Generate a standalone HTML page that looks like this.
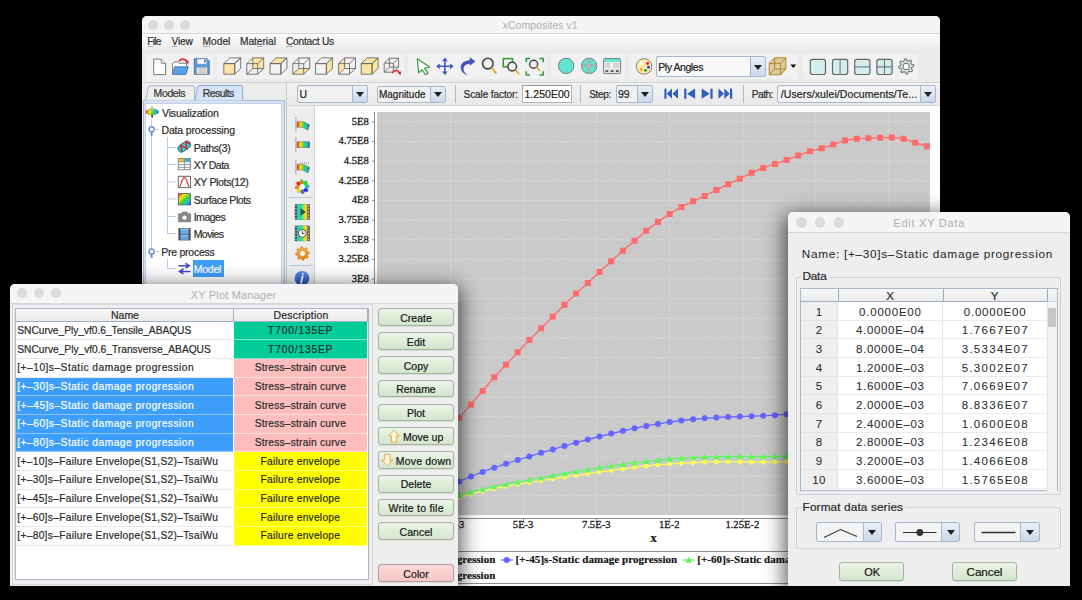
<!DOCTYPE html>
<html><head><meta charset="utf-8"><title>xComposites</title>
<style>
*{margin:0;padding:0;box-sizing:border-box}
html,body{width:1082px;height:600px;overflow:hidden;background:#000}
body{position:relative;font-family:"Liberation Sans",sans-serif;color:#2b2b2b;font-size:10px}
.a{position:absolute}
.t{position:absolute;white-space:nowrap;line-height:1;-webkit-text-stroke:0.2px currentColor}
.win{position:absolute;background:#eeeeee;border-radius:5px 5px 0 0;overflow:hidden}
.tl{position:absolute;width:10px;height:10px;border-radius:50%;background:#dcdcdc}
.ttl{position:absolute;left:0;right:0;height:17px;background:#f5f5f5;border-bottom:1px solid #d6d6d6}
.ttxt{position:absolute;top:4px;left:0;right:0;text-align:center;color:#b0b0b0;font-size:10.5px;line-height:1}
.combo{position:absolute;background:#f1f1f1;border:1px solid #a6b7cf;border-radius:2px}
.combo .arr{position:absolute;top:0;bottom:0;right:0;border-left:1px solid #a6b7cf;background:linear-gradient(#e8eff8,#c9d8ec)}
.combo .arr:after{content:"";position:absolute;left:50%;top:50%;margin:-2px 0 0 -4px;border-left:4px solid transparent;border-right:4px solid transparent;border-top:5px solid #1e1e1e}
.combo .v{position:absolute;left:4px;top:50%;margin-top:-5px;font-size:10.5px;line-height:1;color:#222}
.btn{position:absolute;border:1px solid #a3b39e;border-radius:3px;background:linear-gradient(#eaf4e7,#d3e6cd);text-align:center;font-size:10.5px;color:#1d1d1d;line-height:17px;box-shadow:0 0.5px 0 rgba(0,0,0,0.15)}
.grp{position:absolute;background:#f1f1f1;border-radius:2px}
.shadow{box-shadow:0 6px 20px 4px rgba(0,0,0,0.62)}
.ax{font-family:"Liberation Serif",serif;font-size:10.5px;color:#222}
.axb{font-family:"Liberation Serif",serif;font-size:12px;font-weight:bold;color:#111}
.lg{font-family:"Liberation Serif",serif;font-size:11px;font-weight:bold;color:#111}
.hd{font-size:10.5px;color:#2a2a2a}
.cell{font-size:10.5px;color:#2a2a2a}
.cell2{font-size:11px;color:#2a2a2a}

</style></head><body>
<div class="win shadow" style="left:142px;top:16px;width:798px;height:570px"></div>
<div class="ttl" style="left:142px;right:auto;width:798px;top:16px;height:18px;border-radius:5px 5px 0 0"></div>
<div class="tl" style="left:148.3px;top:20px"></div>
<div class="tl" style="left:164.1px;top:20px"></div>
<div class="tl" style="left:180.0px;top:20px"></div>
<div class="t" style="left:502.70px;top:20.48px;font-size:10.5px;color:#b0b0b0;letter-spacing:0.016px;-webkit-text-stroke:0">xComposites v1</div>
<div class="a" style="left:142px;top:34px;width:798px;height:16px;background:linear-gradient(#fbfbfb,#ececec)"></div>
<div class="t" style="left:147.20px;top:36.93px;font-size:10.2px;color:#303030;letter-spacing:-0.745px">File</div>
<div class="t" style="left:171.60px;top:36.93px;font-size:10.2px;color:#303030;letter-spacing:-0.242px">View</div>
<div class="t" style="left:202.60px;top:36.93px;font-size:10.2px;color:#303030;letter-spacing:0.004px">Model</div>
<div class="t" style="left:240.00px;top:36.93px;font-size:10.2px;color:#303030;letter-spacing:-0.040px">Material</div>
<div class="t" style="left:286.00px;top:36.93px;font-size:10.2px;color:#303030;letter-spacing:-0.250px">Contact Us</div>
<div class="a" style="left:147.5px;top:46.3px;width:5.0px;height:1px;background:#a8a8a8"></div>
<div class="a" style="left:171.8px;top:46.3px;width:5.699999999999989px;height:1px;background:#a8a8a8"></div>
<div class="a" style="left:202.8px;top:46.3px;width:7.199999999999989px;height:1px;background:#a8a8a8"></div>
<div class="a" style="left:256.5px;top:46.3px;width:5.0px;height:1px;background:#a8a8a8"></div>
<div class="a" style="left:286.3px;top:46.3px;width:6.699999999999989px;height:1px;background:#a8a8a8"></div>
<div class="a" style="left:142px;top:50px;width:798px;height:33px;background:#ebebeb;border-bottom:1px solid #d2d2d2"></div>
<div class="grp" style="left:146.3px;top:54px;width:66.6px;height:24.7px"></div>
<div class="grp" style="left:217px;top:54px;width:187.0px;height:24.7px"></div>
<div class="grp" style="left:407.8px;top:54px;width:139.2px;height:24.7px"></div>
<div class="grp" style="left:551px;top:54px;width:73.5px;height:24.7px"></div>
<div class="grp" style="left:629px;top:54px;width:169.0px;height:24.7px"></div>
<div class="grp" style="left:803px;top:54px;width:115.0px;height:24.7px"></div>
<div class="combo" style="left:656px;top:56px;width:110px;height:21px;background:#f8f8f8"><div class="arr" style="width:15px"></div></div>
<div class="t" style="left:658.30px;top:61.88px;font-size:10.5px;color:#222;letter-spacing:-0.437px">Ply Angles</div>
<div class="a" style="left:142px;top:83px;width:145px;height:503px;background:#ececec"></div>
<div class="a" style="left:143px;top:100px;width:142px;height:486px;background:#d6e4f6;border:1px solid #a5bddd"></div>
<div class="a" style="left:145px;top:103px;width:136.5px;height:483px;background:#fff;border:1px solid #c4d2e6"></div>
<svg class="a" style="left:0;top:0" width="1082" height="600"><path d="M145.5 100.5L148.6 86.8Q149 86 150 86H192.5Q194.5 86 194.5 88V100.5" fill="#eeeeee" stroke="#a9bad3" stroke-width="1"/><path d="M194.8 100.5L197.8 86.4Q198.2 85.5 199.2 85.5H240.8Q242.6 85.5 242.6 87.3V100.5" fill="#d6e4f6" stroke="#8faad3" stroke-width="1"/></svg>
<div class="t" style="left:153.60px;top:87.88px;font-size:10.5px;color:#333;letter-spacing:-0.390px">Models</div>
<div class="t" style="left:202.70px;top:87.88px;font-size:10.5px;color:#333;letter-spacing:-0.569px">Results</div>
<svg class="a" style="left:0;top:0" width="1082" height="600"><g stroke="#b9cbe3" stroke-width="1" fill="none"><path d="M151.5 119V251M167.5 137V234M167.5 147.5H176M167.5 164.5H176M167.5 182H176M167.5 199H176M167.5 216.5H176M167.5 233.5H176M151.5 251.5H159M151.5 129.5H159M167.5 259V268.5H176"/></g></svg>
<div class="t" style="left:162.00px;top:107.88px;font-size:10.5px;color:#2c2c2c;letter-spacing:-0.164px">Visualization</div>
<div class="t" style="left:161.50px;top:125.22px;font-size:10.5px;color:#2c2c2c;letter-spacing:-0.170px">Data processing</div>
<div class="t" style="left:193.70px;top:142.57px;font-size:10.5px;color:#2c2c2c;letter-spacing:-0.383px">Paths(3)</div>
<div class="t" style="left:193.70px;top:159.93px;font-size:10.5px;color:#2c2c2c;letter-spacing:-0.536px">XY Data</div>
<div class="t" style="left:193.70px;top:177.28px;font-size:10.5px;color:#2c2c2c;letter-spacing:-0.332px">XY Plots(12)</div>
<div class="t" style="left:193.70px;top:194.62px;font-size:10.5px;color:#2c2c2c;letter-spacing:-0.429px">Surface Plots</div>
<div class="t" style="left:193.70px;top:211.98px;font-size:10.5px;color:#2c2c2c;letter-spacing:-0.487px">Images</div>
<div class="t" style="left:193.70px;top:229.33px;font-size:10.5px;color:#2c2c2c;letter-spacing:-0.572px">Movies</div>
<div class="t" style="left:161.30px;top:246.68px;font-size:10.5px;color:#2c2c2c;letter-spacing:-0.262px">Pre process</div>
<div class="a" style="left:192.9px;top:260.1px;width:31px;height:17px;background:#3d9ffb"></div>
<div class="t" style="left:193.70px;top:264.02px;font-size:10.5px;color:#fff;letter-spacing:-0.225px">Model</div>
<div class="a" style="left:286px;top:83px;width:1px;height:503px;background:#c9c9c9"></div>
<div class="a" style="left:287px;top:83px;width:653px;height:23px;background:linear-gradient(#f2f2f2,#e9e9e9);border-bottom:1px solid #d9d9d9"></div>
<div class="combo" style="left:296.9px;top:85.3px;width:71.5px;height:17.7px"><div class="arr" style="width:15.5px"></div></div>
<div class="t" style="left:299.40px;top:89.38px;font-size:10.5px;color:#222">U</div>
<div class="combo" style="left:376.7px;top:85.5px;width:69.8px;height:17.3px"><div class="arr" style="width:15.3px"></div></div>
<div class="t" style="left:379.00px;top:89.80px;font-size:10px;color:#222;letter-spacing:-0.025px">Magnitude</div>
<div class="a" style="left:454.8px;top:85px;width:1.2px;height:18px;background:#a9bbd4"></div>
<div class="a" style="left:580.3px;top:85px;width:1.2px;height:18px;background:#a9bbd4"></div>
<div class="a" style="left:742.9px;top:85px;width:1.2px;height:18px;background:#a9bbd4"></div>
<div class="t" style="left:463.60px;top:89.80px;font-size:10px;color:#2a2a2a;letter-spacing:-0.090px">Scale factor:</div>
<div class="a" style="left:522px;top:85.2px;width:49.8px;height:17.5px;background:#fff;border:1px solid #b4b4b4;border-top-color:#9a9a9a"></div>
<div class="t" style="left:524.50px;top:89.38px;font-size:10.5px;color:#222;letter-spacing:0.020px">1.250E00</div>
<div class="t" style="left:589.20px;top:89.80px;font-size:10px;color:#2a2a2a;letter-spacing:-0.338px">Step:</div>
<div class="combo" style="left:615.5px;top:85.3px;width:37.1px;height:17.6px"><div class="arr" style="width:15px"></div></div>
<div class="t" style="left:618.00px;top:89.38px;font-size:10.5px;color:#222;letter-spacing:0.020px">99</div>
<div class="t" style="left:751.80px;top:89.80px;font-size:10px;color:#2a2a2a;letter-spacing:-0.438px">Path:</div>
<div class="combo" style="left:777.3px;top:85.4px;width:158.3px;height:17.2px;background:#f3f3f3"><div class="arr" style="width:15px"></div></div>
<div class="t" style="left:780.80px;top:89.38px;font-size:10.5px;color:#222;letter-spacing:0.099px">/Users/xulei/Documents/Te...</div>
<div class="a" style="left:287px;top:106px;width:28px;height:480px;background:#ededed;border-right:1px solid #d4d4d4"></div>
<div class="a" style="left:289px;top:197px;width:24px;height:1px;background:#b4c8e2"></div>
<div class="a" style="left:289px;top:265px;width:24px;height:1px;background:#b4c8e2"></div>
<div class="a" style="left:315px;top:106px;width:625px;height:480px;background:#fff"></div>
<svg class="a" style="left:0;top:0" width="1082" height="600" viewBox="0 0 1082 600">
<defs>
<linearGradient id="rb" x1="0" x2="1" y1="0" y2="0"><stop offset="0" stop-color="#e8301c"/><stop offset="0.3" stop-color="#f5e21a"/><stop offset="0.55" stop-color="#3ed43a"/><stop offset="0.78" stop-color="#1fc3d8"/><stop offset="1" stop-color="#2a4fd6"/></linearGradient>
<linearGradient id="rbd" x1="0" x2="1" y1="0" y2="1"><stop offset="0" stop-color="#e8301c"/><stop offset="0.3" stop-color="#f5e21a"/><stop offset="0.55" stop-color="#3ed43a"/><stop offset="0.78" stop-color="#1fc3d8"/><stop offset="1" stop-color="#2a4fd6"/></linearGradient>
<linearGradient id="film" x1="0" x2="1" y1="0" y2="0"><stop offset="0" stop-color="#19c9e6"/><stop offset="0.45" stop-color="#38e07a"/><stop offset="0.8" stop-color="#f0e424"/><stop offset="1" stop-color="#f3a81c"/></linearGradient>
<linearGradient id="og" x1="0" x2="0" y1="0" y2="1"><stop offset="0" stop-color="#ffc04a"/><stop offset="1" stop-color="#f07a10"/></linearGradient>
<linearGradient id="info" x1="0" x2="0" y1="0" y2="1"><stop offset="0" stop-color="#5f8de8"/><stop offset="1" stop-color="#1f45b8"/></linearGradient>
<radialGradient id="rgear" cx="0.5" cy="0.5" r="0.5"><stop offset="0" stop-color="#fff"/><stop offset="1" stop-color="#fff"/></radialGradient>
</defs>
<path d="M152.2 106v11.5" stroke="#9a9a9a" stroke-width="1.6"/>
<ellipse cx="152.2" cy="111.9" rx="6.6" ry="3.1" fill="url(#rb)" stroke="#a08a70" stroke-width="0.5"/>
<path d="M152.2 106v5" stroke="#c4c4c4" stroke-width="1.4"/><path d="M152.2 114.5v3.2" stroke="#5a5a5a" stroke-width="1.6"/>
<path d="M151.6 131.8v4" stroke="#6d8fd6" stroke-width="2"/><circle cx="151.6" cy="129.3" r="2.6" fill="#fff" stroke="#6d8fd6" stroke-width="1.5"/><path d="M154.3 129.3H158.6" stroke="#b9cbe3" stroke-width="1"/>
<path d="M151.6 254.0v4" stroke="#6d8fd6" stroke-width="2"/><circle cx="151.6" cy="251.5" r="2.6" fill="#fff" stroke="#6d8fd6" stroke-width="1.5"/><path d="M154.3 251.5H158.6" stroke="#b9cbe3" stroke-width="1"/>
<g transform="translate(184.3 146.6) rotate(-35)"><rect x="-7" y="-3.6" width="14" height="7.2" rx="3.6" fill="#2ad3dc" stroke="#2a6070" stroke-width="0.9"/><path d="M-5 2.5L-2 -3L1 2.8L4 -3L6 1" stroke="#e0262a" stroke-width="1.5" fill="none"/></g>
<rect x="178.3" y="158.5" width="12.2" height="11.2" fill="#fff" stroke="#8a8a8a" stroke-width="1"/><rect x="178.8" y="159" width="5.6" height="2.6" fill="#f4c030"/><rect x="184.6" y="159" width="5.4" height="2.6" fill="#38b8e0"/><path d="M178.3 161.8H190.5M178.3 164.6H190.5M178.3 167.3H190.5M184.4 158.5V169.7" stroke="#8a8a8a" stroke-width="0.9"/>
<rect x="178.3" y="176.3" width="12.2" height="11.3" fill="#fff" stroke="#6a6a6a" stroke-width="1"/><path d="M179.3 186.8C181.6 186.5 181.2 177.6 184.4 177.6C187.6 177.6 187.2 186.5 189.5 186.8" stroke="#e0302a" stroke-width="1.1" fill="none"/>
<rect x="178.3" y="193.6" width="12.2" height="11.3" fill="url(#rbd)" stroke="#555" stroke-width="0.8"/>
<path d="M178.4 213.8h3l1.2-1.8h4.4l1.2 1.8h2.4v8h-12.2z" fill="#8c8c8c" stroke="#666" stroke-width="0.6"/><circle cx="184.5" cy="217.6" r="2.6" fill="#fff" stroke="#555" stroke-width="0.6"/>
<rect x="178.4" y="228.2" width="12.2" height="12.2" fill="#4a4a4a"/><rect x="180.4" y="228.8" width="8.2" height="5.1" fill="#6aa8e8"/><rect x="180.4" y="234.7" width="8.2" height="5.1" fill="#6aa8e8"/><path d="M180.4 229.4h8.2M180.4 235.3h8.2" stroke="#a8d0f8" stroke-width="0.8"/>
<path d="M178.5 265.8H188M185.5 263.4L189.5 265.8L185.5 268.2" stroke="#4646d2" stroke-width="1.5" fill="none"/><path d="M190.5 271.4H181M183.5 269L179.5 271.4L183.5 273.8" stroke="#4646d2" stroke-width="1.5" fill="none"/>
<path d="M295.9 117.6V131.6" stroke="#666" stroke-width="1" stroke-dasharray="1.2 1"/><path d="M297 121.8Q303 120.0 309.6 125.0L307.8 130.2Q302.5 126.0 297 127.39999999999999Z" fill="url(#rb)" stroke="#555" stroke-width="0.4"/>
<path d="M295.9 137.60000000000002V151.60000000000002" stroke="#666" stroke-width="1" stroke-dasharray="1.2 1"/><rect x="297" y="141.8" width="12.6" height="5.9" fill="url(#rb)" stroke="#555" stroke-width="0.4"/>
<path d="M295.9 160.3V174.3" stroke="#666" stroke-width="1" stroke-dasharray="1.2 1"/><path d="M297 164.5Q303 162.7 309.6 167.7L307.8 172.9Q302.5 168.7 297 170.1Z" fill="url(#rb)" stroke="#555" stroke-width="0.4"/><path d="M300 163.1H310" stroke="#666" stroke-width="0.8" stroke-dasharray="1 1"/>
<defs><linearGradient id="gr2" x1="0" x2="1" y1="0" y2="1"><stop offset="0" stop-color="#e83a1c"/><stop offset="0.35" stop-color="#f3d420"/><stop offset="0.6" stop-color="#3cc83c"/><stop offset="1" stop-color="#2a4fd6"/></linearGradient></defs>
<clipPath id="gclip"><polygon points="309.26,185.37 309.40,186.77 307.85,187.90 307.53,188.98 308.20,190.78 307.31,191.87 305.42,191.58 304.42,192.11 303.63,193.86 302.23,194.00 301.10,192.45 300.02,192.13 298.22,192.80 297.13,191.91 297.42,190.02 296.89,189.02 295.14,188.23 295.00,186.83 296.55,185.70 296.87,184.62 296.20,182.82 297.09,181.73 298.98,182.02 299.98,181.49 300.77,179.74 302.17,179.60 303.30,181.15 304.38,181.47 306.18,180.80 307.27,181.69 306.98,183.58 307.51,184.58"/></clipPath><g clip-path="url(#gclip)"><path d="M302.2 186.8L311.44 182.97L311.44 190.63Z" fill="#18c8c0"/><path d="M302.2 186.8L311.44 190.63L306.03 196.04Z" fill="#1830f0"/><path d="M302.2 186.8L306.03 196.04L298.37 196.04Z" fill="#6a6aa8"/><path d="M302.2 186.8L298.37 196.04L292.96 190.63Z" fill="#f0e010"/><path d="M302.2 186.8L292.96 190.63L292.96 182.97Z" fill="#ff8010"/><path d="M302.2 186.8L292.96 182.97L298.37 177.56Z" fill="#ff2010"/><path d="M302.2 186.8L298.37 177.56L306.03 177.56Z" fill="#a0a010"/><path d="M302.2 186.8L306.03 177.56L311.44 182.97Z" fill="#10e020"/></g><polygon points="309.26,185.37 309.40,186.77 307.85,187.90 307.53,188.98 308.20,190.78 307.31,191.87 305.42,191.58 304.42,192.11 303.63,193.86 302.23,194.00 301.10,192.45 300.02,192.13 298.22,192.80 297.13,191.91 297.42,190.02 296.89,189.02 295.14,188.23 295.00,186.83 296.55,185.70 296.87,184.62 296.20,182.82 297.09,181.73 298.98,182.02 299.98,181.49 300.77,179.74 302.17,179.60 303.30,181.15 304.38,181.47 306.18,180.80 307.27,181.69 306.98,183.58 307.51,184.58" fill="none" stroke="#555" stroke-width="0.4" opacity="0.6"/><circle cx="302.2" cy="186.8" r="2.8" fill="#fff"/>
<rect x="294.8" y="204.3" width="15" height="15.4" fill="#3a3a3a"/><rect x="297" y="204.3" width="10.6" height="15.4" fill="url(#film)"/><rect x="295.4" y="205.3" width="1.1" height="1.5" fill="#ddd"/><rect x="308.1" y="205.3" width="1.1" height="1.5" fill="#ddd"/><rect x="295.4" y="208.3" width="1.1" height="1.5" fill="#ddd"/><rect x="308.1" y="208.3" width="1.1" height="1.5" fill="#ddd"/><rect x="295.4" y="211.3" width="1.1" height="1.5" fill="#ddd"/><rect x="308.1" y="211.3" width="1.1" height="1.5" fill="#ddd"/><rect x="295.4" y="214.3" width="1.1" height="1.5" fill="#ddd"/><rect x="308.1" y="214.3" width="1.1" height="1.5" fill="#ddd"/><rect x="295.4" y="217.3" width="1.1" height="1.5" fill="#ddd"/><rect x="308.1" y="217.3" width="1.1" height="1.5" fill="#ddd"/>
<path d="M300.5 208.3L305.8 212L300.5 215.7Z" fill="#444"/>
<rect x="294.8" y="225.7" width="15" height="15.4" fill="#3a3a3a"/><rect x="297" y="225.7" width="10.6" height="15.4" fill="url(#film)"/><rect x="295.4" y="226.7" width="1.1" height="1.5" fill="#ddd"/><rect x="308.1" y="226.7" width="1.1" height="1.5" fill="#ddd"/><rect x="295.4" y="229.7" width="1.1" height="1.5" fill="#ddd"/><rect x="308.1" y="229.7" width="1.1" height="1.5" fill="#ddd"/><rect x="295.4" y="232.7" width="1.1" height="1.5" fill="#ddd"/><rect x="308.1" y="232.7" width="1.1" height="1.5" fill="#ddd"/><rect x="295.4" y="235.7" width="1.1" height="1.5" fill="#ddd"/><rect x="308.1" y="235.7" width="1.1" height="1.5" fill="#ddd"/><rect x="295.4" y="238.7" width="1.1" height="1.5" fill="#ddd"/><rect x="308.1" y="238.7" width="1.1" height="1.5" fill="#ddd"/>
<circle cx="302.3" cy="233.4" r="4" fill="#fff" stroke="#444" stroke-width="0.9"/><path d="M302.3 230.8V233.5H304.6" stroke="#333" stroke-width="0.9" fill="none"/>
<polygon points="309.16,252.15 309.30,253.48 307.44,254.46 307.16,255.41 308.17,257.26 307.33,258.29 305.31,257.67 304.44,258.14 303.85,260.16 302.52,260.30 301.54,258.44 300.59,258.16 298.74,259.17 297.71,258.33 298.33,256.31 297.86,255.44 295.84,254.85 295.70,253.52 297.56,252.54 297.84,251.59 296.83,249.74 297.67,248.71 299.69,249.33 300.56,248.86 301.15,246.84 302.48,246.70 303.46,248.56 304.41,248.84 306.26,247.83 307.29,248.67 306.67,250.69 307.14,251.56" fill="url(#og)" stroke="#c86a10" stroke-width="0.7" stroke-linejoin="round"/><circle cx="302.5" cy="253.5" r="3.0" fill="#fff" stroke="#c86a10" stroke-width="0.7"/>
<circle cx="302" cy="278.3" r="7.4" fill="url(#info)"/><path d="M302.9 273.6v0.1M302.6 276.2L301.1 282.8" stroke="#fff" stroke-width="1.8" stroke-linecap="round"/>
<path d="M153.7 59.1H161.3L165.6 63.4V74.6H153.7Z" fill="#fff" stroke="#7a7a7a" stroke-width="1"/><path d="M161.3 59.1V63.4H165.6" fill="#eee" stroke="#7a7a7a" stroke-width="0.9"/>
<path d="M172.6 74.2V63.3L174.3 61.9H178L179 63.3H186.5V66.5" fill="#fff" stroke="#777" stroke-width="0.9"/><path d="M174.6 66.8H188.3L186 74.4H172.4Z" fill="#58a0e8" stroke="#3a6aa8" stroke-width="0.8"/>
<path d="M179 61.3C181 58.3 186 58.3 187.2 62.3" stroke="#e0202a" stroke-width="1.6" fill="none"/><path d="M185.2 61.5L188.6 60.2L188.2 64.6Z" fill="#e0202a"/>
<path d="M194.4 58.8H207L209.2 61V74.3H194.4Z" fill="#5a9fe2" stroke="#3a6aa0" stroke-width="0.9"/><rect x="197.5" y="59.2" width="8.8" height="4.6" fill="#fff"/><rect x="204.2" y="59.8" width="1.4" height="2.6" fill="#555"/><rect x="196.6" y="67.2" width="10.6" height="7" fill="#eee" stroke="#888" stroke-width="0.5"/><path d="M198 69H206M198 71H206M198 73H206" stroke="#999" stroke-width="0.7"/>
<path d="M223.8 63.6H234.70000000000002V74.1948H223.8Z" fill="#fde6a4" stroke="none"/><path d="M223.8 63.6L229.8 57.9H240.70000000000002L234.70000000000002 63.6Z" fill="#f3f3f3" stroke="none"/><path d="M234.70000000000002 63.6L240.70000000000002 57.9V68.4948L234.70000000000002 74.1948Z" fill="#f3f3f3" stroke="none"/><path d="M223.8 63.6H234.70000000000002V74.1948H223.8ZM223.8 63.6L229.8 57.9H240.70000000000002L234.70000000000002 63.6ZM234.70000000000002 63.6L240.70000000000002 57.9V68.4948L234.70000000000002 74.1948Z" fill="none" stroke="#6a6a6a" stroke-width="0.9"/>
<path d="M252.8 57.9H263.7V68.4948H252.8Z" fill="#fde6a4" stroke="none"/><path d="M246.8 63.6H257.7V74.1948H246.8ZM252.8 57.9H263.7V68.4948H252.8ZM246.8 63.6l6 -5.7M257.7 63.6l6 -5.7M257.7 74.1948l6 -5.7M246.8 74.1948l6 -5.7" fill="none" stroke="#6a6a6a" stroke-width="0.9"/>
<path d="M270 63.6H280.9V74.1948H270Z" fill="#f3f3f3" stroke="none"/><path d="M270 63.6L276 57.9H286.9L280.9 63.6Z" fill="#fde6a4" stroke="none"/><path d="M280.9 63.6L286.9 57.9V68.4948L280.9 74.1948Z" fill="#f3f3f3" stroke="none"/><path d="M270 63.6H280.9V74.1948H270ZM270 63.6L276 57.9H286.9L280.9 63.6ZM280.9 63.6L286.9 57.9V68.4948L280.9 74.1948Z" fill="none" stroke="#6a6a6a" stroke-width="0.9"/>
<path d="M292.8 74.1948L298.8 68.4948H309.7L303.7 74.1948Z" fill="#fde6a4" stroke="none"/><path d="M292.8 63.6H303.7V74.1948H292.8ZM298.8 57.9H309.7V68.4948H298.8ZM292.8 63.6l6 -5.7M303.7 63.6l6 -5.7M303.7 74.1948l6 -5.7M292.8 74.1948l6 -5.7" fill="none" stroke="#6a6a6a" stroke-width="0.9"/>
<path d="M315.5 63.6H326.4V74.1948H315.5Z" fill="#f3f3f3" stroke="none"/><path d="M315.5 63.6L321.5 57.9H332.4L326.4 63.6Z" fill="#f3f3f3" stroke="none"/><path d="M326.4 63.6L332.4 57.9V68.4948L326.4 74.1948Z" fill="#fde6a4" stroke="none"/><path d="M315.5 63.6H326.4V74.1948H315.5ZM315.5 63.6L321.5 57.9H332.4L326.4 63.6ZM326.4 63.6L332.4 57.9V68.4948L326.4 74.1948Z" fill="none" stroke="#6a6a6a" stroke-width="0.9"/>
<path d="M338.6 63.6L344.6 57.9V68.4948L338.6 74.1948Z" fill="#fde6a4" stroke="none"/><path d="M338.6 63.6H349.5V74.1948H338.6ZM344.6 57.9H355.5V68.4948H344.6ZM338.6 63.6l6 -5.7M349.5 63.6l6 -5.7M349.5 74.1948l6 -5.7M338.6 74.1948l6 -5.7" fill="none" stroke="#6a6a6a" stroke-width="0.9"/>
<path d="M361.2 63.6H372.09999999999997V74.1948H361.2Z" fill="#fde6a4" stroke="none"/><path d="M361.2 63.6L367.2 57.9H378.09999999999997L372.09999999999997 63.6Z" fill="#fde6a4" stroke="none"/><path d="M372.09999999999997 63.6L378.09999999999997 57.9V68.4948L372.09999999999997 74.1948Z" fill="#fde6a4" stroke="none"/><path d="M361.2 63.6H372.09999999999997V74.1948H361.2ZM361.2 63.6L367.2 57.9H378.09999999999997L372.09999999999997 63.6ZM372.09999999999997 63.6L378.09999999999997 57.9V68.4948L372.09999999999997 74.1948Z" fill="none" stroke="#6a6a6a" stroke-width="0.9"/>
<path d="M384.2 63.2H393.4V72.14240000000001H384.2ZM389.4 58.2H398.59999999999997V67.14240000000001H389.4ZM384.2 63.2l5.2 -5M393.4 63.2l5.2 -5M393.4 72.14240000000001l5.2 -5M384.2 72.14240000000001l5.2 -5" fill="none" stroke="#6a6a6a" stroke-width="0.9"/>
<path d="M392 73.2C394 69.8 398 69.6 399.6 73" stroke="#e0202a" stroke-width="1.5" fill="none"/><path d="M397.6 72.4L401.2 71.4L400.5 75.4Z" fill="#e0202a"/>
<path d="M417.3 58.8L429.6 67L424.6 68.2L428 73.2L425.4 74.8L422.2 69.8L418.6 72.8Z" fill="#fff" stroke="#3a9a3a" stroke-width="1.2" stroke-linejoin="round"/>
<path d="M444.9 58.3V74.3M436.9 66.3H452.9" stroke="#3f5ec0" stroke-width="1.6"/><path d="M444.9 57.5L442 61.2H447.8ZM444.9 75.1L442 71.4H447.8ZM436.1 66.3L439.8 63.4V69.2ZM453.7 66.3L450 63.4V69.2Z" fill="#3f5ec0"/>
<path d="M467.8 75.4C458.6 72.6 457.6 60.8 469.7 60.2V57.2L475.4 61.4L469.7 65.8V63.8C462.4 64.2 461.2 71 467.8 75.4Z" fill="#4252b8"/>
<circle cx="487.8" cy="63.6" r="5.3" fill="none" stroke="#444" stroke-width="1.6"/><path d="M491.6 67.6L496.4 73.6" stroke="#e8a030" stroke-width="1.8"/>
<rect x="503.3" y="58.6" width="9.2" height="8.2" fill="none" stroke="#2f9a2f" stroke-width="1.5"/><circle cx="512.2" cy="66.6" r="4.3" fill="#f1f1f1" stroke="#444" stroke-width="1.5"/><path d="M515.3 69.8L519.2 74.2" stroke="#e8a030" stroke-width="1.7"/>
<path d="M526.3 62.3V58.6H530M539.5 58.6H543.2V62.3M543.2 71.3V75H539.5M530 75H526.3V71.3" fill="none" stroke="#2f9a2f" stroke-width="1.5"/><circle cx="533.6" cy="64.3" r="4" fill="none" stroke="#444" stroke-width="1.4"/><path d="M536.5 67.2L540 71" stroke="#e8a030" stroke-width="1.6"/>
<circle cx="566.1" cy="65.9" r="7.7" fill="#5fe5d0" stroke="#6f6f6f" stroke-width="0.9"/>
<circle cx="589.1" cy="65.9" r="7.7" fill="#5fe5d0" stroke="#6f6f6f" stroke-width="0.9"/><path d="M589.1 58.2V73.6M581.4 65.9H596.8" stroke="#8a8a8a" stroke-width="2.2"/><path d="M589.1 58.2V73.6M581.4 65.9H596.8" stroke="#e8e8e8" stroke-width="0.8"/>
<rect x="603.6" y="58.5" width="17" height="15.1" rx="1.2" fill="#e4e4e4" stroke="#6f6f6f" stroke-width="0.9"/><rect x="604.1" y="59" width="16" height="2.8" fill="#5fe5d0"/><rect x="605.5" y="70.2" width="2.8" height="1.8" fill="#555"/><rect x="610.7" y="70.2" width="2.8" height="1.8" fill="#555"/><rect x="615.9" y="70.2" width="2.8" height="1.8" fill="#555"/><path d="M606 64H610M613 64H619M606 66.3H610M613 66.3H619" stroke="#aaa" stroke-width="0.7"/><rect x="610.5" y="63" width="1.6" height="4.5" fill="#fff"/>
<circle cx="644" cy="66.4" r="7.8" fill="#fde6aa" stroke="#7a7a7a" stroke-width="0.9"/><circle cx="641" cy="63.2" r="1.5" fill="#fff"/><circle cx="647.6" cy="63.5" r="1.4" fill="#e02020"/><circle cx="648.5" cy="67.2" r="1.4" fill="#1a3fd0"/><circle cx="645.5" cy="70.4" r="1.4" fill="#2a9a2a"/><circle cx="641.2" cy="69.6" r="1.4" fill="#f0a020"/>
<path d="M769.2 63.4L774.6 57.8H785.8V69L780.6 74.8H769.2Z" fill="#dccb9e"/><g stroke="#b08a2a" stroke-width="1" fill="none"><path d="M769.2 63.4H780.6V74.8H769.2ZM774.6 57.8H785.8V69H774.6ZM769.2 63.4L774.6 57.8M780.6 63.4L785.8 57.8M780.6 74.8L785.8 69M769.2 74.8L774.6 69"/></g>
<path d="M790.4 64.6H796.2L793.3 67.9Z" fill="#111"/>
<rect x="810.3" y="59.3" width="15.2" height="15.2" rx="2.2" fill="#d3ecec" stroke="#666" stroke-width="1.2"/>
<rect x="832.5" y="59.3" width="15.2" height="15.2" rx="2.2" fill="#d3ecec" stroke="#666" stroke-width="1.2"/><path d="M840.1 59.3V74.5" stroke="#777" stroke-width="1.1"/>
<rect x="854.7" y="59.3" width="15.2" height="15.2" rx="2.2" fill="#d3ecec" stroke="#666" stroke-width="1.2"/><path d="M854.7 66.9H869.9" stroke="#777" stroke-width="1.1"/>
<rect x="876.9" y="59.3" width="15.2" height="15.2" rx="2.2" fill="#d3ecec" stroke="#666" stroke-width="1.2"/><path d="M884.5 59.3V74.5M876.9 66.9H892.1" stroke="#777" stroke-width="1.1"/>
<polygon points="913.65,64.89 913.80,66.37 911.72,67.48 911.40,68.53 912.53,70.60 911.59,71.75 909.34,71.06 908.37,71.59 907.71,73.85 906.23,74.00 905.12,71.92 904.07,71.60 902.00,72.73 900.85,71.79 901.54,69.54 901.01,68.57 898.75,67.91 898.60,66.43 900.68,65.32 901.00,64.27 899.87,62.20 900.81,61.05 903.06,61.74 904.03,61.21 904.69,58.95 906.17,58.80 907.28,60.88 908.33,61.20 910.40,60.07 911.55,61.01 910.86,63.26 911.39,64.23" fill="#d3e9e9" stroke="#7a7a7a" stroke-width="1.1" stroke-linejoin="round"/><circle cx="906.2" cy="66.4" r="3.1" fill="#fff" stroke="#7a7a7a" stroke-width="1.1"/>
<g fill="#2f5fb8"><rect x="664.4" y="88.6" width="2.1" height="10.2"/><path d="M672 88.6V98.8L666.8 93.7ZM678 88.6V98.8L672.5 93.7Z"/><rect x="684.2" y="88.6" width="2.2" height="10.2"/><path d="M695.1 88.6V98.8L687 93.7Z"/><path d="M701.7 88.6V98.8L709.8 93.7Z"/><rect x="710.4" y="88.6" width="2.2" height="10.2"/><path d="M718.5 88.6V98.8L724 93.7ZM724.3 88.6V98.8L729.8 93.7Z"/><rect x="730" y="88.6" width="2.2" height="10.2"/></g>
</svg>
<svg class="a" style="left:0;top:0" width="1082" height="600" viewBox="0 0 1082 600">
<defs><clipPath id="pc"><rect x="377" y="112" width="553" height="403"/></clipPath></defs>
<rect x="377" y="112" width="553" height="403" fill="#cacaca"/>
<path d="M377 495.3H930 M377 475.7H930 M377 456.0H930 M377 436.4H930 M377 416.7H930 M377 397.0H930 M377 377.4H930 M377 357.7H930 M377 338.1H930 M377 318.4H930 M377 298.7H930 M377 279.1H930 M377 259.4H930 M377 239.8H930 M377 220.1H930 M377 200.4H930 M377 180.8H930 M377 161.1H930 M377 141.5H930 M377 121.8H930 M450.5 112V515 M523.5 112V515 M596.6 112V515 M669.7 112V515 M742.8 112V515 M815.8 112V515 M888.9 112V515" stroke="#dadada" stroke-width="1" stroke-dasharray="1.9 1.2" fill="none"/>
<g clip-path="url(#pc)">
<polyline points="377.4,515.0 389.1,512.5 400.8,510.0 412.5,507.5 424.2,504.9 435.9,502.4 447.5,499.9 459.2,497.4 470.9,494.0 482.6,491.1 494.3,488.6 506.0,486.4 517.7,484.3 529.4,482.4 541.1,480.6 552.8,478.8 564.5,477.0 576.1,475.3 587.8,473.6 599.5,471.9 611.2,470.3 622.9,468.8 634.6,467.3 646.3,466.0 658.0,464.9 669.7,463.9 681.4,463.1 693.1,462.5 704.7,462.1 716.4,461.9 728.1,461.8 739.8,461.9 751.5,462.0 763.2,462.1 774.9,462.1 786.6,461.9 798.3,461.7 810.0,461.5 821.7,461.3 833.3,461.1 845.0,460.9 856.7,460.7 868.4,460.5 880.1,460.3 891.8,460.1 903.5,459.9 915.2,459.7 926.9,459.5 938.6,459.3" fill="none" stroke="#fafa5c" stroke-width="1.3"/>
<polyline points="377.4,515.0 389.1,512.2 400.8,509.3 412.5,506.5 424.2,503.6 435.9,500.8 447.5,497.9 459.2,495.1 470.9,491.9 482.6,489.1 494.3,486.5 506.0,484.1 517.7,481.9 529.4,479.7 541.1,477.6 552.8,475.5 564.5,473.5 576.1,471.5 587.8,469.6 599.5,467.7 611.2,465.9 622.9,464.3 634.6,462.7 646.3,461.3 658.0,460.1 669.7,459.0 681.4,458.2 693.1,457.5 704.7,457.0 716.4,456.7 728.1,456.6 739.8,456.5 751.5,456.6 763.2,456.5 774.9,456.4 786.6,456.1 798.3,455.9 810.0,455.7 821.7,455.5 833.3,455.3 845.0,455.1 856.7,454.9 868.4,454.7 880.1,454.5 891.8,454.3 903.5,454.1 915.2,453.9 926.9,453.7 938.6,453.5" fill="none" stroke="#62f562" stroke-width="1.3"/>
<polyline points="377.4,515.0 389.1,510.2 400.8,505.4 412.5,500.6 424.2,495.8 435.9,491.0 447.5,486.3 459.2,481.5 470.9,476.5 482.6,471.9 494.3,467.7 506.0,463.8 517.7,460.0 529.4,456.4 541.1,452.8 552.8,449.4 564.5,446.0 576.1,442.7 587.8,439.5 599.5,436.5 611.2,433.6 622.9,430.8 634.6,428.3 646.3,425.9 658.0,423.9 669.7,422.1 681.4,420.5 693.1,419.3 704.7,418.3 716.4,417.5 728.1,417.0 739.8,416.6 751.5,416.2 763.2,415.8 774.9,415.2 786.6,414.3 798.3,414.1 810.0,413.9 821.7,413.7 833.3,413.5 845.0,413.3 856.7,413.1 868.4,412.9 880.1,412.7 891.8,412.5 903.5,412.3 915.2,412.1 926.9,411.9 938.6,411.7" fill="none" stroke="#6464ff" stroke-width="1.3"/>
<polyline points="377.4,515.0 389.1,501.1 400.8,487.2 412.5,473.3 424.2,459.4 435.9,445.5 447.5,431.6 459.2,417.9 470.9,404.4 482.6,391.0 494.3,377.3 506.0,364.8 517.7,352.3 529.4,340.0 541.1,328.3 552.8,316.5 564.5,304.8 576.1,293.6 587.8,282.9 599.5,272.0 611.2,261.3 622.9,250.7 634.6,240.8 646.3,230.7 658.0,221.9 669.7,213.9 681.4,206.9 693.1,201.3 704.7,196.0 716.4,189.9 728.1,184.3 739.8,178.7 751.5,172.8 763.2,167.9 774.9,164.0 786.6,159.9 798.3,155.5 810.0,151.2 821.7,148.3 833.3,144.6 845.0,140.5 856.7,138.7 868.4,138.3 880.1,137.7 891.8,137.4 903.5,138.7 915.2,142.7 926.9,146.2 938.6,151.0" fill="none" stroke="#ff6a6a" stroke-width="1.3"/>
<path d="M377.4 511.8L380.6 515.0L377.4 518.2L374.2 515.0ZM389.1 509.3L392.3 512.5L389.1 515.7L385.9 512.5ZM400.8 506.8L404.0 510.0L400.8 513.2L397.6 510.0ZM412.5 504.3L415.7 507.5L412.5 510.7L409.3 507.5ZM424.2 501.7L427.4 504.9L424.2 508.1L421.0 504.9ZM435.9 499.2L439.1 502.4L435.9 505.6L432.7 502.4ZM447.5 496.7L450.7 499.9L447.5 503.1L444.3 499.9ZM459.2 494.2L462.4 497.4L459.2 500.6L456.0 497.4ZM470.9 490.8L474.1 494.0L470.9 497.2L467.7 494.0ZM482.6 487.9L485.8 491.1L482.6 494.3L479.4 491.1ZM494.3 485.4L497.5 488.6L494.3 491.8L491.1 488.6ZM506.0 483.2L509.2 486.4L506.0 489.6L502.8 486.4ZM517.7 481.1L520.9 484.3L517.7 487.5L514.5 484.3ZM529.4 479.2L532.6 482.4L529.4 485.6L526.2 482.4ZM541.1 477.4L544.3 480.6L541.1 483.8L537.9 480.6ZM552.8 475.6L556.0 478.8L552.8 482.0L549.6 478.8ZM564.5 473.8L567.7 477.0L564.5 480.2L561.3 477.0ZM576.1 472.1L579.3 475.3L576.1 478.5L572.9 475.3ZM587.8 470.4L591.0 473.6L587.8 476.8L584.6 473.6ZM599.5 468.7L602.7 471.9L599.5 475.1L596.3 471.9ZM611.2 467.1L614.4 470.3L611.2 473.5L608.0 470.3ZM622.9 465.6L626.1 468.8L622.9 472.0L619.7 468.8ZM634.6 464.1L637.8 467.3L634.6 470.5L631.4 467.3ZM646.3 462.8L649.5 466.0L646.3 469.2L643.1 466.0ZM658.0 461.7L661.2 464.9L658.0 468.1L654.8 464.9ZM669.7 460.7L672.9 463.9L669.7 467.1L666.5 463.9ZM681.4 459.9L684.6 463.1L681.4 466.3L678.2 463.1ZM693.1 459.3L696.3 462.5L693.1 465.7L689.9 462.5ZM704.7 458.9L707.9 462.1L704.7 465.3L701.5 462.1ZM716.4 458.7L719.6 461.9L716.4 465.1L713.2 461.9ZM728.1 458.6L731.3 461.8L728.1 465.0L724.9 461.8ZM739.8 458.7L743.0 461.9L739.8 465.1L736.6 461.9ZM751.5 458.8L754.7 462.0L751.5 465.2L748.3 462.0ZM763.2 458.9L766.4 462.1L763.2 465.3L760.0 462.1ZM774.9 458.9L778.1 462.1L774.9 465.3L771.7 462.1ZM786.6 458.7L789.8 461.9L786.6 465.1L783.4 461.9ZM798.3 458.5L801.5 461.7L798.3 464.9L795.1 461.7ZM810.0 458.3L813.2 461.5L810.0 464.7L806.8 461.5ZM821.7 458.1L824.9 461.3L821.7 464.5L818.5 461.3ZM833.3 457.9L836.5 461.1L833.3 464.3L830.1 461.1ZM845.0 457.7L848.2 460.9L845.0 464.1L841.8 460.9ZM856.7 457.5L859.9 460.7L856.7 463.9L853.5 460.7ZM868.4 457.3L871.6 460.5L868.4 463.7L865.2 460.5ZM880.1 457.1L883.3 460.3L880.1 463.5L876.9 460.3ZM891.8 456.9L895.0 460.1L891.8 463.3L888.6 460.1ZM903.5 456.7L906.7 459.9L903.5 463.1L900.3 459.9ZM915.2 456.5L918.4 459.7L915.2 462.9L912.0 459.7ZM926.9 456.3L930.1 459.5L926.9 462.7L923.7 459.5ZM938.6 456.1L941.8 459.3L938.6 462.5L935.4 459.3Z" fill="#fafa5c"/>
<path d="M377.4 511.8L380.6 517.8L374.2 517.8ZM389.1 509.0L392.3 515.0L385.9 515.0ZM400.8 506.1L404.0 512.1L397.6 512.1ZM412.5 503.3L415.7 509.3L409.3 509.3ZM424.2 500.4L427.4 506.4L421.0 506.4ZM435.9 497.6L439.1 503.6L432.7 503.6ZM447.5 494.7L450.7 500.7L444.3 500.7ZM459.2 491.9L462.4 497.9L456.0 497.9ZM470.9 488.7L474.1 494.7L467.7 494.7ZM482.6 485.9L485.8 491.9L479.4 491.9ZM494.3 483.3L497.5 489.3L491.1 489.3ZM506.0 480.9L509.2 486.9L502.8 486.9ZM517.7 478.7L520.9 484.7L514.5 484.7ZM529.4 476.5L532.6 482.5L526.2 482.5ZM541.1 474.4L544.3 480.4L537.9 480.4ZM552.8 472.3L556.0 478.3L549.6 478.3ZM564.5 470.3L567.7 476.3L561.3 476.3ZM576.1 468.3L579.3 474.3L572.9 474.3ZM587.8 466.4L591.0 472.4L584.6 472.4ZM599.5 464.5L602.7 470.5L596.3 470.5ZM611.2 462.7L614.4 468.7L608.0 468.7ZM622.9 461.1L626.1 467.1L619.7 467.1ZM634.6 459.5L637.8 465.5L631.4 465.5ZM646.3 458.1L649.5 464.1L643.1 464.1ZM658.0 456.9L661.2 462.9L654.8 462.9ZM669.7 455.8L672.9 461.8L666.5 461.8ZM681.4 455.0L684.6 461.0L678.2 461.0ZM693.1 454.3L696.3 460.3L689.9 460.3ZM704.7 453.8L707.9 459.8L701.5 459.8ZM716.4 453.5L719.6 459.5L713.2 459.5ZM728.1 453.4L731.3 459.4L724.9 459.4ZM739.8 453.3L743.0 459.3L736.6 459.3ZM751.5 453.4L754.7 459.4L748.3 459.4ZM763.2 453.3L766.4 459.3L760.0 459.3ZM774.9 453.2L778.1 459.2L771.7 459.2ZM786.6 452.9L789.8 458.9L783.4 458.9ZM798.3 452.7L801.5 458.7L795.1 458.7ZM810.0 452.5L813.2 458.5L806.8 458.5ZM821.7 452.3L824.9 458.3L818.5 458.3ZM833.3 452.1L836.5 458.1L830.1 458.1ZM845.0 451.9L848.2 457.9L841.8 457.9ZM856.7 451.7L859.9 457.7L853.5 457.7ZM868.4 451.5L871.6 457.5L865.2 457.5ZM880.1 451.3L883.3 457.3L876.9 457.3ZM891.8 451.1L895.0 457.1L888.6 457.1ZM903.5 450.9L906.7 456.9L900.3 456.9ZM915.2 450.7L918.4 456.7L912.0 456.7ZM926.9 450.5L930.1 456.5L923.7 456.5ZM938.6 450.3L941.8 456.3L935.4 456.3Z" fill="#62f562"/>
<path d="M374.4 515.0a3 3 0 1 0 6 0a3 3 0 1 0 -6 0ZM386.1 510.2a3 3 0 1 0 6 0a3 3 0 1 0 -6 0ZM397.8 505.4a3 3 0 1 0 6 0a3 3 0 1 0 -6 0ZM409.5 500.6a3 3 0 1 0 6 0a3 3 0 1 0 -6 0ZM421.2 495.8a3 3 0 1 0 6 0a3 3 0 1 0 -6 0ZM432.9 491.0a3 3 0 1 0 6 0a3 3 0 1 0 -6 0ZM444.5 486.3a3 3 0 1 0 6 0a3 3 0 1 0 -6 0ZM456.2 481.5a3 3 0 1 0 6 0a3 3 0 1 0 -6 0ZM467.9 476.5a3 3 0 1 0 6 0a3 3 0 1 0 -6 0ZM479.6 471.9a3 3 0 1 0 6 0a3 3 0 1 0 -6 0ZM491.3 467.7a3 3 0 1 0 6 0a3 3 0 1 0 -6 0ZM503.0 463.8a3 3 0 1 0 6 0a3 3 0 1 0 -6 0ZM514.7 460.0a3 3 0 1 0 6 0a3 3 0 1 0 -6 0ZM526.4 456.4a3 3 0 1 0 6 0a3 3 0 1 0 -6 0ZM538.1 452.8a3 3 0 1 0 6 0a3 3 0 1 0 -6 0ZM549.8 449.4a3 3 0 1 0 6 0a3 3 0 1 0 -6 0ZM561.5 446.0a3 3 0 1 0 6 0a3 3 0 1 0 -6 0ZM573.1 442.7a3 3 0 1 0 6 0a3 3 0 1 0 -6 0ZM584.8 439.5a3 3 0 1 0 6 0a3 3 0 1 0 -6 0ZM596.5 436.5a3 3 0 1 0 6 0a3 3 0 1 0 -6 0ZM608.2 433.6a3 3 0 1 0 6 0a3 3 0 1 0 -6 0ZM619.9 430.8a3 3 0 1 0 6 0a3 3 0 1 0 -6 0ZM631.6 428.3a3 3 0 1 0 6 0a3 3 0 1 0 -6 0ZM643.3 425.9a3 3 0 1 0 6 0a3 3 0 1 0 -6 0ZM655.0 423.9a3 3 0 1 0 6 0a3 3 0 1 0 -6 0ZM666.7 422.1a3 3 0 1 0 6 0a3 3 0 1 0 -6 0ZM678.4 420.5a3 3 0 1 0 6 0a3 3 0 1 0 -6 0ZM690.1 419.3a3 3 0 1 0 6 0a3 3 0 1 0 -6 0ZM701.7 418.3a3 3 0 1 0 6 0a3 3 0 1 0 -6 0ZM713.4 417.5a3 3 0 1 0 6 0a3 3 0 1 0 -6 0ZM725.1 417.0a3 3 0 1 0 6 0a3 3 0 1 0 -6 0ZM736.8 416.6a3 3 0 1 0 6 0a3 3 0 1 0 -6 0ZM748.5 416.2a3 3 0 1 0 6 0a3 3 0 1 0 -6 0ZM760.2 415.8a3 3 0 1 0 6 0a3 3 0 1 0 -6 0ZM771.9 415.2a3 3 0 1 0 6 0a3 3 0 1 0 -6 0ZM783.6 414.3a3 3 0 1 0 6 0a3 3 0 1 0 -6 0ZM795.3 414.1a3 3 0 1 0 6 0a3 3 0 1 0 -6 0ZM807.0 413.9a3 3 0 1 0 6 0a3 3 0 1 0 -6 0ZM818.7 413.7a3 3 0 1 0 6 0a3 3 0 1 0 -6 0ZM830.3 413.5a3 3 0 1 0 6 0a3 3 0 1 0 -6 0ZM842.0 413.3a3 3 0 1 0 6 0a3 3 0 1 0 -6 0ZM853.7 413.1a3 3 0 1 0 6 0a3 3 0 1 0 -6 0ZM865.4 412.9a3 3 0 1 0 6 0a3 3 0 1 0 -6 0ZM877.1 412.7a3 3 0 1 0 6 0a3 3 0 1 0 -6 0ZM888.8 412.5a3 3 0 1 0 6 0a3 3 0 1 0 -6 0ZM900.5 412.3a3 3 0 1 0 6 0a3 3 0 1 0 -6 0ZM912.2 412.1a3 3 0 1 0 6 0a3 3 0 1 0 -6 0ZM923.9 411.9a3 3 0 1 0 6 0a3 3 0 1 0 -6 0ZM935.6 411.7a3 3 0 1 0 6 0a3 3 0 1 0 -6 0Z" fill="#6464ff"/>
<path d="M374.4 512.0h6v6h-6ZM386.1 498.1h6v6h-6ZM397.8 484.2h6v6h-6ZM409.5 470.3h6v6h-6ZM421.2 456.4h6v6h-6ZM432.9 442.5h6v6h-6ZM444.5 428.6h6v6h-6ZM456.2 414.9h6v6h-6ZM467.9 401.4h6v6h-6ZM479.6 388.0h6v6h-6ZM491.3 374.3h6v6h-6ZM503.0 361.8h6v6h-6ZM514.7 349.3h6v6h-6ZM526.4 337.0h6v6h-6ZM538.1 325.3h6v6h-6ZM549.8 313.5h6v6h-6ZM561.5 301.8h6v6h-6ZM573.1 290.6h6v6h-6ZM584.8 279.9h6v6h-6ZM596.5 269.0h6v6h-6ZM608.2 258.3h6v6h-6ZM619.9 247.7h6v6h-6ZM631.6 237.8h6v6h-6ZM643.3 227.7h6v6h-6ZM655.0 218.9h6v6h-6ZM666.7 210.9h6v6h-6ZM678.4 203.9h6v6h-6ZM690.1 198.3h6v6h-6ZM701.7 193.0h6v6h-6ZM713.4 186.9h6v6h-6ZM725.1 181.3h6v6h-6ZM736.8 175.7h6v6h-6ZM748.5 169.8h6v6h-6ZM760.2 164.9h6v6h-6ZM771.9 161.0h6v6h-6ZM783.6 156.9h6v6h-6ZM795.3 152.5h6v6h-6ZM807.0 148.2h6v6h-6ZM818.7 145.3h6v6h-6ZM830.3 141.6h6v6h-6ZM842.0 137.5h6v6h-6ZM853.7 135.7h6v6h-6ZM865.4 135.3h6v6h-6ZM877.1 134.7h6v6h-6ZM888.8 134.4h6v6h-6ZM900.5 135.7h6v6h-6ZM912.2 139.7h6v6h-6ZM923.9 143.2h6v6h-6ZM935.6 148.0h6v6h-6Z" fill="#ff6a6a"/>
</g>
<path d="M374.5 112V516M377 518.5H930" stroke="#8a8a8a" stroke-width="1" fill="none"/>
<path d="M372 515.0H374 M372 495.3H374 M372 475.7H374 M372 456.0H374 M372 436.4H374 M372 416.7H374 M372 397.0H374 M372 377.4H374 M372 357.7H374 M372 338.1H374 M372 318.4H374 M372 298.7H374 M372 279.1H374 M372 259.4H374 M372 239.8H374 M372 220.1H374 M372 200.4H374 M372 180.8H374 M372 161.1H374 M372 141.5H374 M372 121.8H374 M377.4 518.5V520.3 M450.5 518.5V520.3 M523.5 518.5V520.3 M596.6 518.5V520.3 M669.7 518.5V520.3 M742.8 518.5V520.3 M815.8 518.5V520.3 M888.9 518.5V520.3" stroke="#8a8a8a" stroke-width="1" fill="none"/>
</svg>
<div class="t" style="left:363.50px;top:509.80px;font-size:10.6px;color:#1a1a1a;font-family:'Liberation Serif',serif;-webkit-text-stroke:0.3px #1a1a1a">0</div>
<div class="t" style="left:343.77px;top:490.14px;font-size:10.6px;color:#1a1a1a;font-family:'Liberation Serif',serif;-webkit-text-stroke:0.3px #1a1a1a">2.5E7</div>
<div class="t" style="left:351.72px;top:470.48px;font-size:10.6px;color:#1a1a1a;font-family:'Liberation Serif',serif;-webkit-text-stroke:0.3px #1a1a1a">5E7</div>
<div class="t" style="left:343.77px;top:450.82px;font-size:10.6px;color:#1a1a1a;font-family:'Liberation Serif',serif;-webkit-text-stroke:0.3px #1a1a1a">7.5E7</div>
<div class="t" style="left:351.72px;top:431.16px;font-size:10.6px;color:#1a1a1a;font-family:'Liberation Serif',serif;-webkit-text-stroke:0.3px #1a1a1a">1E8</div>
<div class="t" style="left:338.47px;top:411.50px;font-size:10.6px;color:#1a1a1a;font-family:'Liberation Serif',serif;-webkit-text-stroke:0.3px #1a1a1a">1.25E8</div>
<div class="t" style="left:343.77px;top:391.84px;font-size:10.6px;color:#1a1a1a;font-family:'Liberation Serif',serif;-webkit-text-stroke:0.3px #1a1a1a">1.5E8</div>
<div class="t" style="left:338.47px;top:372.18px;font-size:10.6px;color:#1a1a1a;font-family:'Liberation Serif',serif;-webkit-text-stroke:0.3px #1a1a1a">1.75E8</div>
<div class="t" style="left:351.72px;top:352.52px;font-size:10.6px;color:#1a1a1a;font-family:'Liberation Serif',serif;-webkit-text-stroke:0.3px #1a1a1a">2E8</div>
<div class="t" style="left:338.47px;top:332.86px;font-size:10.6px;color:#1a1a1a;font-family:'Liberation Serif',serif;-webkit-text-stroke:0.3px #1a1a1a">2.25E8</div>
<div class="t" style="left:343.77px;top:313.20px;font-size:10.6px;color:#1a1a1a;font-family:'Liberation Serif',serif;-webkit-text-stroke:0.3px #1a1a1a">2.5E8</div>
<div class="t" style="left:338.47px;top:293.54px;font-size:10.6px;color:#1a1a1a;font-family:'Liberation Serif',serif;-webkit-text-stroke:0.3px #1a1a1a">2.75E8</div>
<div class="t" style="left:351.72px;top:273.88px;font-size:10.6px;color:#1a1a1a;font-family:'Liberation Serif',serif;-webkit-text-stroke:0.3px #1a1a1a">3E8</div>
<div class="t" style="left:338.47px;top:254.22px;font-size:10.6px;color:#1a1a1a;font-family:'Liberation Serif',serif;-webkit-text-stroke:0.3px #1a1a1a">3.25E8</div>
<div class="t" style="left:343.77px;top:234.56px;font-size:10.6px;color:#1a1a1a;font-family:'Liberation Serif',serif;-webkit-text-stroke:0.3px #1a1a1a">3.5E8</div>
<div class="t" style="left:338.47px;top:214.90px;font-size:10.6px;color:#1a1a1a;font-family:'Liberation Serif',serif;-webkit-text-stroke:0.3px #1a1a1a">3.75E8</div>
<div class="t" style="left:351.72px;top:195.24px;font-size:10.6px;color:#1a1a1a;font-family:'Liberation Serif',serif;-webkit-text-stroke:0.3px #1a1a1a">4E8</div>
<div class="t" style="left:338.47px;top:175.58px;font-size:10.6px;color:#1a1a1a;font-family:'Liberation Serif',serif;-webkit-text-stroke:0.3px #1a1a1a">4.25E8</div>
<div class="t" style="left:343.77px;top:155.92px;font-size:10.6px;color:#1a1a1a;font-family:'Liberation Serif',serif;-webkit-text-stroke:0.3px #1a1a1a">4.5E8</div>
<div class="t" style="left:338.47px;top:136.26px;font-size:10.6px;color:#1a1a1a;font-family:'Liberation Serif',serif;-webkit-text-stroke:0.3px #1a1a1a">4.75E8</div>
<div class="t" style="left:351.72px;top:116.60px;font-size:10.6px;color:#1a1a1a;font-family:'Liberation Serif',serif;-webkit-text-stroke:0.3px #1a1a1a">5E8</div>
<div class="t" style="left:374.35px;top:520.40px;font-size:10.6px;color:#1a1a1a;font-family:'Liberation Serif',serif;-webkit-text-stroke:0.3px #1a1a1a">0</div>
<div class="t" style="left:435.79px;top:520.40px;font-size:10.6px;color:#1a1a1a;font-family:'Liberation Serif',serif;-webkit-text-stroke:0.3px #1a1a1a">2.5E-3</div>
<div class="t" style="left:512.84px;top:520.40px;font-size:10.6px;color:#1a1a1a;font-family:'Liberation Serif',serif;-webkit-text-stroke:0.3px #1a1a1a">5E-3</div>
<div class="t" style="left:581.93px;top:520.40px;font-size:10.6px;color:#1a1a1a;font-family:'Liberation Serif',serif;-webkit-text-stroke:0.3px #1a1a1a">7.5E-3</div>
<div class="t" style="left:658.98px;top:520.40px;font-size:10.6px;color:#1a1a1a;font-family:'Liberation Serif',serif;-webkit-text-stroke:0.3px #1a1a1a">1E-2</div>
<div class="t" style="left:725.42px;top:520.40px;font-size:10.6px;color:#1a1a1a;font-family:'Liberation Serif',serif;-webkit-text-stroke:0.3px #1a1a1a">1.25E-2</div>
<div class="t" style="left:801.14px;top:520.40px;font-size:10.6px;color:#1a1a1a;font-family:'Liberation Serif',serif;-webkit-text-stroke:0.3px #1a1a1a">1.5E-2</div>
<div class="t" style="left:871.56px;top:520.40px;font-size:10.6px;color:#1a1a1a;font-family:'Liberation Serif',serif;-webkit-text-stroke:0.3px #1a1a1a">1.75E-2</div>
<div class="t" style="left:650.38px;top:532.12px;font-size:12.5px;color:#111;font-family:'Liberation Serif',serif;font-weight:bold">x</div>
<div class="a" style="left:317px;top:551.2px;width:620px;height:33px;border-top:1.2px solid #8c8c8c;border-bottom:1.2px solid #8c8c8c"></div>
<div class="t" style="left:333.70px;top:554.17px;font-size:11px;color:#151515;letter-spacing:0.058px;font-family:'Liberation Serif',serif;font-weight:bold">[+-30]s-Static damage progression</div>
<div class="t" style="left:515.50px;top:554.17px;font-size:11px;color:#151515;letter-spacing:0.058px;font-family:'Liberation Serif',serif;font-weight:bold">[+-45]s-Static damage progression</div>
<div class="t" style="left:697.30px;top:554.17px;font-size:11px;color:#151515;letter-spacing:0.058px;font-family:'Liberation Serif',serif;font-weight:bold">[+-60]s-Static damage progression</div>
<div class="t" style="left:333.70px;top:569.67px;font-size:11px;color:#151515;letter-spacing:0.058px;font-family:'Liberation Serif',serif;font-weight:bold">[+-80]s-Static damage progression</div>
<svg class="a" style="left:0;top:0" width="1082" height="600"><path d="M319 560.0h12" stroke="#ff6a6a" stroke-width="1.3"/><rect x="322" y="557.0" width="6" height="6" fill="#ff6a6a"/><path d="M500.8 560.0h12" stroke="#6464ff" stroke-width="1.3"/><circle cx="506.8" cy="560.0" r="3" fill="#6464ff"/><path d="M682.6 560.0h12" stroke="#62f562" stroke-width="1.3"/><path d="M688.6 556.8L691.8000000000001 562.8L685.4 562.8Z" fill="#62f562"/><path d="M319 575.5h12" stroke="#fafa5c" stroke-width="1.3"/><path d="M325 572.3L328.2 575.5L325 578.7L321.8 575.5Z" fill="#fafa5c"/></svg>
<div class="win shadow" style="left:10px;top:284px;width:448px;height:302px;border-radius:5px 5px 0 0"></div>
<div class="ttl" style="left:10px;right:auto;width:448px;top:284px;height:20px;border-radius:5px 5px 0 0"></div>
<div class="tl" style="left:16.9px;top:287.9px;width:10.5px;height:10.5px"></div>
<div class="tl" style="left:33.9px;top:287.9px;width:10.5px;height:10.5px"></div>
<div class="tl" style="left:50.8px;top:287.9px;width:10.5px;height:10.5px"></div>
<div class="t" style="left:190.80px;top:289.95px;font-size:11px;color:#b0b0b0;letter-spacing:0.167px;-webkit-text-stroke:0">XY Plot Manager</div>
<div class="a" style="left:12px;top:303.5px;width:361px;height:281px;border:1px solid #d6d6d6;border-top-color:#dcdcdc"></div>
<div class="a" style="left:15px;top:308px;width:353.5px;height:271.5px;background:#fff;border:1px solid #a9b7c9"></div>
<div class="a" style="left:16px;top:309px;width:352px;height:13px;background:linear-gradient(#f7f7f7,#ebebeb);border-bottom:1px solid #9fb0c6"></div>
<div class="a" style="left:233.3px;top:309px;width:1px;height:13px;background:#9fb0c6"></div>
<div class="a" style="left:367px;top:309px;width:1px;height:13px;background:#9fb0c6"></div>
<div class="t" style="left:111.05px;top:310.48px;font-size:10.5px;color:#2a2a2a;letter-spacing:-0.037px">Name</div>
<div class="t" style="left:273.40px;top:310.48px;font-size:10.5px;color:#2a2a2a;letter-spacing:0.248px">Description</div>
<div class="a" style="left:16px;top:322px;width:217px;height:18px;background:#fff;border-bottom:1px solid #eaeaea"></div>
<div class="a" style="left:234px;top:322px;width:133px;height:18px;background:#00cc9a;border-bottom:1px solid rgba(255,255,255,0.5)"></div>
<div class="t" style="left:17.30px;top:326.03px;font-size:10.2px;color:#2a2a2a;letter-spacing:-0.014px">SNCurve_Ply_vf0.6_Tensile_ABAQUS</div>
<div class="t" style="left:268.10px;top:326.03px;font-size:10.2px;color:#2a2a2a;letter-spacing:0.854px">T700/135EP</div>
<div class="a" style="left:16px;top:340px;width:217px;height:19px;background:#fff;border-bottom:1px solid #eaeaea"></div>
<div class="a" style="left:234px;top:340px;width:133px;height:19px;background:#00cc9a;border-bottom:1px solid rgba(255,255,255,0.5)"></div>
<div class="t" style="left:17.30px;top:344.70px;font-size:10.2px;color:#2a2a2a;letter-spacing:0.006px">SNCurve_Ply_vf0.6_Transverse_ABAQUS</div>
<div class="t" style="left:268.10px;top:344.70px;font-size:10.2px;color:#2a2a2a;letter-spacing:0.854px">T700/135EP</div>
<div class="a" style="left:16px;top:359px;width:217px;height:19px;background:#fff;border-bottom:1px solid #eaeaea"></div>
<div class="a" style="left:234px;top:359px;width:133px;height:19px;background:#ffbebe;border-bottom:1px solid rgba(255,255,255,0.5)"></div>
<div class="t" style="left:17.30px;top:363.37px;font-size:10.2px;color:#2a2a2a;letter-spacing:0.492px">[+–10]s–Static damage progression</div>
<div class="t" style="left:254.65px;top:363.37px;font-size:10.2px;color:#2a2a2a;letter-spacing:0.222px">Stress–strain curve</div>
<div class="a" style="left:16px;top:378px;width:217px;height:18px;background:#3d9ffb;border-bottom:1px solid #8fc4f8"></div>
<div class="a" style="left:234px;top:378px;width:133px;height:18px;background:#ffbebe;border-bottom:1px solid rgba(255,255,255,0.5)"></div>
<div class="t" style="left:17.30px;top:382.04px;font-size:10.2px;color:#fff;letter-spacing:0.492px">[+–30]s–Static damage progression</div>
<div class="t" style="left:254.65px;top:382.04px;font-size:10.2px;color:#2a2a2a;letter-spacing:0.222px">Stress–strain curve</div>
<div class="a" style="left:16px;top:396px;width:217px;height:19px;background:#3d9ffb;border-bottom:1px solid #8fc4f8"></div>
<div class="a" style="left:234px;top:396px;width:133px;height:19px;background:#ffbebe;border-bottom:1px solid rgba(255,255,255,0.5)"></div>
<div class="t" style="left:17.30px;top:400.71px;font-size:10.2px;color:#fff;letter-spacing:0.492px">[+–45]s–Static damage progression</div>
<div class="t" style="left:254.65px;top:400.71px;font-size:10.2px;color:#2a2a2a;letter-spacing:0.222px">Stress–strain curve</div>
<div class="a" style="left:16px;top:415px;width:217px;height:19px;background:#3d9ffb;border-bottom:1px solid #8fc4f8"></div>
<div class="a" style="left:234px;top:415px;width:133px;height:19px;background:#ffbebe;border-bottom:1px solid rgba(255,255,255,0.5)"></div>
<div class="t" style="left:17.30px;top:419.38px;font-size:10.2px;color:#fff;letter-spacing:0.492px">[+–60]s–Static damage progression</div>
<div class="t" style="left:254.65px;top:419.38px;font-size:10.2px;color:#2a2a2a;letter-spacing:0.222px">Stress–strain curve</div>
<div class="a" style="left:16px;top:434px;width:217px;height:18px;background:#3d9ffb;border-bottom:1px solid #8fc4f8"></div>
<div class="a" style="left:234px;top:434px;width:133px;height:18px;background:#ffbebe;border-bottom:1px solid rgba(255,255,255,0.5)"></div>
<div class="t" style="left:17.30px;top:438.05px;font-size:10.2px;color:#fff;letter-spacing:0.492px">[+–80]s–Static damage progression</div>
<div class="t" style="left:254.65px;top:438.05px;font-size:10.2px;color:#2a2a2a;letter-spacing:0.222px">Stress–strain curve</div>
<div class="a" style="left:16px;top:452px;width:217px;height:19px;background:#fff;border-bottom:1px solid #eaeaea"></div>
<div class="a" style="left:234px;top:452px;width:133px;height:19px;background:#ffff00;border-bottom:1px solid rgba(255,255,255,0.5)"></div>
<div class="t" style="left:17.30px;top:456.72px;font-size:10.2px;color:#2a2a2a;letter-spacing:0.309px">[+–10]s–Failure Envelope(S1,S2)–TsaiWu</div>
<div class="t" style="left:260.55px;top:456.72px;font-size:10.2px;color:#2a2a2a;letter-spacing:0.272px">Failure envelope</div>
<div class="a" style="left:16px;top:471px;width:217px;height:19px;background:#fff;border-bottom:1px solid #eaeaea"></div>
<div class="a" style="left:234px;top:471px;width:133px;height:19px;background:#ffff00;border-bottom:1px solid rgba(255,255,255,0.5)"></div>
<div class="t" style="left:17.30px;top:475.39px;font-size:10.2px;color:#2a2a2a;letter-spacing:0.309px">[+–30]s–Failure Envelope(S1,S2)–TsaiWu</div>
<div class="t" style="left:260.55px;top:475.39px;font-size:10.2px;color:#2a2a2a;letter-spacing:0.272px">Failure envelope</div>
<div class="a" style="left:16px;top:490px;width:217px;height:18px;background:#fff;border-bottom:1px solid #eaeaea"></div>
<div class="a" style="left:234px;top:490px;width:133px;height:18px;background:#ffff00;border-bottom:1px solid rgba(255,255,255,0.5)"></div>
<div class="t" style="left:17.30px;top:494.06px;font-size:10.2px;color:#2a2a2a;letter-spacing:0.309px">[+–45]s–Failure Envelope(S1,S2)–TsaiWu</div>
<div class="t" style="left:260.55px;top:494.06px;font-size:10.2px;color:#2a2a2a;letter-spacing:0.272px">Failure envelope</div>
<div class="a" style="left:16px;top:508px;width:217px;height:19px;background:#fff;border-bottom:1px solid #eaeaea"></div>
<div class="a" style="left:234px;top:508px;width:133px;height:19px;background:#ffff00;border-bottom:1px solid rgba(255,255,255,0.5)"></div>
<div class="t" style="left:17.30px;top:512.73px;font-size:10.2px;color:#2a2a2a;letter-spacing:0.309px">[+–60]s–Failure Envelope(S1,S2)–TsaiWu</div>
<div class="t" style="left:260.55px;top:512.73px;font-size:10.2px;color:#2a2a2a;letter-spacing:0.272px">Failure envelope</div>
<div class="a" style="left:16px;top:527px;width:217px;height:19px;background:#fff;border-bottom:1px solid #eaeaea"></div>
<div class="a" style="left:234px;top:527px;width:133px;height:19px;background:#ffff00;border-bottom:1px solid rgba(255,255,255,0.5)"></div>
<div class="t" style="left:17.30px;top:531.40px;font-size:10.2px;color:#2a2a2a;letter-spacing:0.309px">[+–80]s–Failure Envelope(S1,S2)–TsaiWu</div>
<div class="t" style="left:260.55px;top:531.40px;font-size:10.2px;color:#2a2a2a;letter-spacing:0.272px">Failure envelope</div>
<div class="btn" style="left:378.3px;top:308.4px;width:75.5px;height:17.8px"></div>
<div class="t" style="left:400.15px;top:312.97px;font-size:10.5px;color:#141414;letter-spacing:0.037px">Create</div>
<div class="btn" style="left:378.3px;top:332.2px;width:75.5px;height:17.8px"></div>
<div class="t" style="left:406.80px;top:336.75px;font-size:10.5px;color:#141414;letter-spacing:0.102px">Edit</div>
<div class="btn" style="left:378.3px;top:356.0px;width:75.5px;height:17.8px"></div>
<div class="t" style="left:403.65px;top:360.53px;font-size:10.5px;color:#141414;letter-spacing:0.062px">Copy</div>
<div class="btn" style="left:378.3px;top:379.7px;width:75.5px;height:17.8px"></div>
<div class="t" style="left:396.35px;top:384.31px;font-size:10.5px;color:#141414;letter-spacing:-0.078px">Rename</div>
<div class="btn" style="left:378.3px;top:403.5px;width:75.5px;height:17.8px"></div>
<div class="t" style="left:406.95px;top:408.09px;font-size:10.5px;color:#141414;letter-spacing:0.002px">Plot</div>
<div class="btn" style="left:378.3px;top:427.3px;width:75.5px;height:17.8px"></div>
<div class="t" style="left:402.90px;top:431.97px;font-size:10.5px;color:#141414;letter-spacing:0.021px">Move up</div>
<div class="btn" style="left:378.3px;top:451.1px;width:75.5px;height:17.8px"></div>
<div class="t" style="left:395.80px;top:455.75px;font-size:10.5px;color:#141414;letter-spacing:0.188px">Move down</div>
<div class="btn" style="left:378.3px;top:474.9px;width:75.5px;height:17.8px"></div>
<div class="t" style="left:400.70px;top:479.44px;font-size:10.5px;color:#141414;letter-spacing:0.050px">Delete</div>
<div class="btn" style="left:378.3px;top:498.6px;width:75.5px;height:17.8px"></div>
<div class="t" style="left:388.50px;top:503.21px;font-size:10.5px;color:#141414;letter-spacing:0.223px">Write to file</div>
<div class="btn" style="left:378.3px;top:522.4px;width:75.5px;height:17.8px"></div>
<div class="t" style="left:399.60px;top:527.00px;font-size:10.5px;color:#141414;letter-spacing:0.023px">Cancel</div>
<div class="btn" style="left:378.3px;top:564.3px;width:75.5px;height:18px;background:linear-gradient(#fdd8d8,#f8c6c6);border-color:#b39b9b"></div>
<div class="t" style="left:403.25px;top:569.08px;font-size:10.5px;color:#141414;letter-spacing:0.102px">Color</div>
<svg class="a" style="left:0;top:0" width="1082" height="600"><defs><linearGradient id="arw" x1="0" x2="1"><stop offset="0" stop-color="#ffd98a"/><stop offset="0.5" stop-color="#fffdf2"/><stop offset="1" stop-color="#ffd98a"/></linearGradient></defs><path d="M394 430.3L399.4 436.2H396.6V442.2H391.4V436.2H388.6Z" fill="url(#arw)" stroke="#e6a43c" stroke-width="0.9" stroke-linejoin="round"/><path d="M387.3 465.8L392.7 459.9H389.9V454.2H384.7V459.9H381.9Z" fill="url(#arw)" stroke="#e6a43c" stroke-width="0.9" stroke-linejoin="round"/></svg>
<div class="win shadow" style="left:788px;top:212px;width:282px;height:374px;border-radius:5px 5px 0 0"></div>
<div class="ttl" style="left:788px;right:auto;width:282px;top:212px;height:21px;border-radius:5px 5px 0 0"></div>
<div class="tl" style="left:796.0px;top:217.2px;width:10.5px;height:10.5px"></div>
<div class="tl" style="left:814.8px;top:217.2px;width:10.5px;height:10.5px"></div>
<div class="tl" style="left:833.5px;top:217.2px;width:10.5px;height:10.5px"></div>
<div class="t" style="left:893.30px;top:218.15px;font-size:11px;color:#b0b0b0;letter-spacing:0.747px;-webkit-text-stroke:0">Edit XY Data</div>
<div class="t" style="left:801.70px;top:248.97px;font-size:11.8px;color:#2a2a2a;letter-spacing:0.703px;-webkit-text-stroke:0.05px #2a2a2a">Name: [+–30]s–Static damage progression</div>
<div class="a" style="left:796.4px;top:276.5px;width:264.6px;height:218.5px;border:1px solid #d0d0d0;border-radius:2px"></div>
<div class="a" style="left:800.5px;top:272px;width:29px;height:8px;background:#ececec"></div>
<div class="t" style="left:802.50px;top:270.77px;font-size:11.8px;color:#2a2a2a;letter-spacing:-0.242px">Data</div>
<div class="a" style="left:799.5px;top:288.2px;width:258px;height:203px;background:#fff;border:1px solid #a9b7c9"></div>
<div class="a" style="left:800.5px;top:289.2px;width:246.5px;height:13.3px;background:linear-gradient(#f7f7f7,#ebebeb);border-bottom:1px solid #9fb0c6"></div>
<div class="a" style="left:837.5px;top:289.2px;width:1px;height:13.3px;background:#9fb0c6"></div>
<div class="a" style="left:942.5px;top:289.2px;width:1px;height:13.3px;background:#9fb0c6"></div>
<div class="a" style="left:1046.5px;top:289.2px;width:1px;height:13.3px;background:#9fb0c6"></div>
<div class="t" style="left:886.16px;top:290.83px;font-size:11.5px;color:#2a2a2a">X</div>
<div class="t" style="left:990.66px;top:290.83px;font-size:11.5px;color:#2a2a2a">Y</div>
<div class="a" style="left:1047.5px;top:289.2px;width:9.5px;height:13.3px;background:linear-gradient(#f7f7f7,#ebebeb);border-bottom:1px solid #c8d2de"></div>
<div class="a" style="left:1047px;top:302.5px;width:10px;height:188px;background:#f3f3f3;border-left:1px solid #e2e2e2"></div>
<div class="a" style="left:1048.3px;top:308px;width:7.5px;height:18.5px;background:#c6c6c6;border-radius:1px"></div>
<div class="a" style="left:800.5px;top:302px;width:37px;height:19px;background:#efefef;border-bottom:1px solid #e3e3e3;border-right:1px solid #e3e3e3"></div>
<div class="a" style="left:837.5px;top:302px;width:209.5px;height:19px;border-bottom:1px solid #ebebeb"></div>
<div class="a" style="left:942px;top:302px;width:1px;height:19px;background:#e6e6e6"></div>
<div class="t" style="left:815.65px;top:306.63px;font-size:11.5px;color:#2a2a2a;-webkit-text-stroke:0.05px #2a2a2a">1</div>
<div class="t" style="left:859.10px;top:306.63px;font-size:11.5px;color:#2a2a2a;letter-spacing:0.770px;-webkit-text-stroke:0.05px #2a2a2a">0.0000E00</div>
<div class="t" style="left:963.80px;top:306.63px;font-size:11.5px;color:#2a2a2a;letter-spacing:0.770px;-webkit-text-stroke:0.05px #2a2a2a">0.0000E00</div>
<div class="a" style="left:800.5px;top:321px;width:37px;height:18px;background:#efefef;border-bottom:1px solid #e3e3e3;border-right:1px solid #e3e3e3"></div>
<div class="a" style="left:837.5px;top:321px;width:209.5px;height:18px;border-bottom:1px solid #ebebeb"></div>
<div class="a" style="left:942px;top:321px;width:1px;height:18px;background:#e6e6e6"></div>
<div class="t" style="left:815.65px;top:325.30px;font-size:11.5px;color:#2a2a2a;-webkit-text-stroke:0.05px #2a2a2a">2</div>
<div class="t" style="left:856.05px;top:325.30px;font-size:11.5px;color:#2a2a2a;letter-spacing:0.652px;-webkit-text-stroke:0.05px #2a2a2a">4.0000E–04</div>
<div class="t" style="left:961.70px;top:325.30px;font-size:11.5px;color:#2a2a2a;letter-spacing:1.295px;-webkit-text-stroke:0.05px #2a2a2a">1.7667E07</div>
<div class="a" style="left:800.5px;top:339px;width:37px;height:19px;background:#efefef;border-bottom:1px solid #e3e3e3;border-right:1px solid #e3e3e3"></div>
<div class="a" style="left:837.5px;top:339px;width:209.5px;height:19px;border-bottom:1px solid #ebebeb"></div>
<div class="a" style="left:942px;top:339px;width:1px;height:19px;background:#e6e6e6"></div>
<div class="t" style="left:815.65px;top:343.97px;font-size:11.5px;color:#2a2a2a;-webkit-text-stroke:0.05px #2a2a2a">3</div>
<div class="t" style="left:856.05px;top:343.97px;font-size:11.5px;color:#2a2a2a;letter-spacing:0.652px;-webkit-text-stroke:0.05px #2a2a2a">8.0000E–04</div>
<div class="t" style="left:961.70px;top:343.97px;font-size:11.5px;color:#2a2a2a;letter-spacing:1.295px;-webkit-text-stroke:0.05px #2a2a2a">3.5334E07</div>
<div class="a" style="left:800.5px;top:358px;width:37px;height:19px;background:#efefef;border-bottom:1px solid #e3e3e3;border-right:1px solid #e3e3e3"></div>
<div class="a" style="left:837.5px;top:358px;width:209.5px;height:19px;border-bottom:1px solid #ebebeb"></div>
<div class="a" style="left:942px;top:358px;width:1px;height:19px;background:#e6e6e6"></div>
<div class="t" style="left:815.65px;top:362.64px;font-size:11.5px;color:#2a2a2a;-webkit-text-stroke:0.05px #2a2a2a">4</div>
<div class="t" style="left:856.05px;top:362.64px;font-size:11.5px;color:#2a2a2a;letter-spacing:0.652px;-webkit-text-stroke:0.05px #2a2a2a">1.2000E–03</div>
<div class="t" style="left:961.70px;top:362.64px;font-size:11.5px;color:#2a2a2a;letter-spacing:1.295px;-webkit-text-stroke:0.05px #2a2a2a">5.3002E07</div>
<div class="a" style="left:800.5px;top:377px;width:37px;height:18px;background:#efefef;border-bottom:1px solid #e3e3e3;border-right:1px solid #e3e3e3"></div>
<div class="a" style="left:837.5px;top:377px;width:209.5px;height:18px;border-bottom:1px solid #ebebeb"></div>
<div class="a" style="left:942px;top:377px;width:1px;height:18px;background:#e6e6e6"></div>
<div class="t" style="left:815.65px;top:381.31px;font-size:11.5px;color:#2a2a2a;-webkit-text-stroke:0.05px #2a2a2a">5</div>
<div class="t" style="left:856.05px;top:381.31px;font-size:11.5px;color:#2a2a2a;letter-spacing:0.652px;-webkit-text-stroke:0.05px #2a2a2a">1.6000E–03</div>
<div class="t" style="left:961.70px;top:381.31px;font-size:11.5px;color:#2a2a2a;letter-spacing:1.295px;-webkit-text-stroke:0.05px #2a2a2a">7.0669E07</div>
<div class="a" style="left:800.5px;top:395px;width:37px;height:19px;background:#efefef;border-bottom:1px solid #e3e3e3;border-right:1px solid #e3e3e3"></div>
<div class="a" style="left:837.5px;top:395px;width:209.5px;height:19px;border-bottom:1px solid #ebebeb"></div>
<div class="a" style="left:942px;top:395px;width:1px;height:19px;background:#e6e6e6"></div>
<div class="t" style="left:815.65px;top:399.98px;font-size:11.5px;color:#2a2a2a;-webkit-text-stroke:0.05px #2a2a2a">6</div>
<div class="t" style="left:856.05px;top:399.98px;font-size:11.5px;color:#2a2a2a;letter-spacing:0.652px;-webkit-text-stroke:0.05px #2a2a2a">2.0000E–03</div>
<div class="t" style="left:961.70px;top:399.98px;font-size:11.5px;color:#2a2a2a;letter-spacing:1.295px;-webkit-text-stroke:0.05px #2a2a2a">8.8336E07</div>
<div class="a" style="left:800.5px;top:414px;width:37px;height:19px;background:#efefef;border-bottom:1px solid #e3e3e3;border-right:1px solid #e3e3e3"></div>
<div class="a" style="left:837.5px;top:414px;width:209.5px;height:19px;border-bottom:1px solid #ebebeb"></div>
<div class="a" style="left:942px;top:414px;width:1px;height:19px;background:#e6e6e6"></div>
<div class="t" style="left:815.65px;top:418.65px;font-size:11.5px;color:#2a2a2a;-webkit-text-stroke:0.05px #2a2a2a">7</div>
<div class="t" style="left:856.05px;top:418.65px;font-size:11.5px;color:#2a2a2a;letter-spacing:0.652px;-webkit-text-stroke:0.05px #2a2a2a">2.4000E–03</div>
<div class="t" style="left:961.70px;top:418.65px;font-size:11.5px;color:#2a2a2a;letter-spacing:1.295px;-webkit-text-stroke:0.05px #2a2a2a">1.0600E08</div>
<div class="a" style="left:800.5px;top:433px;width:37px;height:18px;background:#efefef;border-bottom:1px solid #e3e3e3;border-right:1px solid #e3e3e3"></div>
<div class="a" style="left:837.5px;top:433px;width:209.5px;height:18px;border-bottom:1px solid #ebebeb"></div>
<div class="a" style="left:942px;top:433px;width:1px;height:18px;background:#e6e6e6"></div>
<div class="t" style="left:815.65px;top:437.32px;font-size:11.5px;color:#2a2a2a;-webkit-text-stroke:0.05px #2a2a2a">8</div>
<div class="t" style="left:856.05px;top:437.32px;font-size:11.5px;color:#2a2a2a;letter-spacing:0.652px;-webkit-text-stroke:0.05px #2a2a2a">2.8000E–03</div>
<div class="t" style="left:961.70px;top:437.32px;font-size:11.5px;color:#2a2a2a;letter-spacing:1.295px;-webkit-text-stroke:0.05px #2a2a2a">1.2346E08</div>
<div class="a" style="left:800.5px;top:451px;width:37px;height:19px;background:#efefef;border-bottom:1px solid #e3e3e3;border-right:1px solid #e3e3e3"></div>
<div class="a" style="left:837.5px;top:451px;width:209.5px;height:19px;border-bottom:1px solid #ebebeb"></div>
<div class="a" style="left:942px;top:451px;width:1px;height:19px;background:#e6e6e6"></div>
<div class="t" style="left:815.65px;top:455.99px;font-size:11.5px;color:#2a2a2a;-webkit-text-stroke:0.05px #2a2a2a">9</div>
<div class="t" style="left:856.05px;top:455.99px;font-size:11.5px;color:#2a2a2a;letter-spacing:0.652px;-webkit-text-stroke:0.05px #2a2a2a">3.2000E–03</div>
<div class="t" style="left:961.70px;top:455.99px;font-size:11.5px;color:#2a2a2a;letter-spacing:1.295px;-webkit-text-stroke:0.05px #2a2a2a">1.4066E08</div>
<div class="a" style="left:800.5px;top:470px;width:37px;height:19px;background:#efefef;border-bottom:1px solid #e3e3e3;border-right:1px solid #e3e3e3"></div>
<div class="a" style="left:837.5px;top:470px;width:209.5px;height:19px;border-bottom:1px solid #ebebeb"></div>
<div class="a" style="left:942px;top:470px;width:1px;height:19px;background:#e6e6e6"></div>
<div class="t" style="left:812.15px;top:474.66px;font-size:11.5px;color:#2a2a2a;letter-spacing:0.508px;-webkit-text-stroke:0.05px #2a2a2a">10</div>
<div class="t" style="left:856.05px;top:474.66px;font-size:11.5px;color:#2a2a2a;letter-spacing:0.652px;-webkit-text-stroke:0.05px #2a2a2a">3.6000E–03</div>
<div class="t" style="left:961.70px;top:474.66px;font-size:11.5px;color:#2a2a2a;letter-spacing:1.295px;-webkit-text-stroke:0.05px #2a2a2a">1.5765E08</div>
<div class="a" style="left:796.4px;top:506.6px;width:264.6px;height:42px;border:1px solid #d0d0d0;border-radius:2px"></div>
<div class="a" style="left:800.5px;top:502px;width:105px;height:8px;background:#ececec"></div>
<div class="t" style="left:802.60px;top:501.77px;font-size:11.8px;color:#2a2a2a;letter-spacing:0.119px">Format data series</div>
<div class="combo" style="left:816.4px;top:522.4px;width:65.6px;height:20px;background:#f3f3f3"><div class="arr" style="width:18.4px"></div></div>
<div class="combo" style="left:895.4px;top:522.4px;width:65px;height:20px;background:#f3f3f3"><div class="arr" style="width:18px"></div></div>
<div class="combo" style="left:974px;top:522.4px;width:65.6px;height:20px;background:#f3f3f3"><div class="arr" style="width:18.2px"></div></div>
<svg class="a" style="left:0;top:0" width="1082" height="600"><path d="M824 537.5L840.5 529.5L857 536.5" stroke="#333" stroke-width="1.1" fill="none"/><path d="M903 532.5H936.5" stroke="#333" stroke-width="1.1" fill="none"/><circle cx="919.8" cy="532.5" r="3.4" fill="#333"/><path d="M981.5 532.5H1015.5" stroke="#333" stroke-width="1.3" fill="none"/></svg>
<div class="btn" style="left:839.4px;top:561.6px;width:65px;height:19.8px"></div>
<div class="t" style="left:864.15px;top:567.45px;font-size:11px;color:#141414">OK</div>
<div class="btn" style="left:952px;top:561.6px;width:64.6px;height:19.8px"></div>
<div class="t" style="left:966.60px;top:566.77px;font-size:11.8px;color:#141414;letter-spacing:-0.186px">Cancel</div>

</body></html>
